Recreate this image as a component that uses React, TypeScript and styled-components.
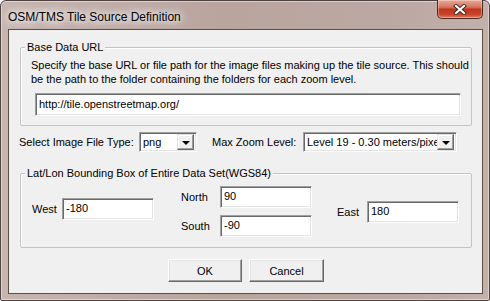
import React from "react";
import styled, { createGlobalStyle } from "styled-components";

const GlobalStyle = createGlobalStyle`
  html, body {
    margin: 0;
    padding: 0;
    background: #ffffff;
    overflow: hidden;
  }
`;

const Window = styled.div`
  box-sizing: border-box;
  width: 490px;
  height: 301px;
  display: flex;
  flex-direction: column;
  border: 1px solid #4e4240;
  border-radius: 6px 6px 2px 2px;
  background: linear-gradient(to right, #c7b5b0 0%, #b9a49e 45%, #bca8a2 80%, #c3b0ab 100%);
  box-shadow: inset 0 0 0 1px rgba(255, 255, 255, 0.45);
  font-family: "Liberation Sans", Arial, sans-serif;
`;

const TitleBar = styled.div`
  height: 28px;
  display: flex;
  align-items: flex-start;
  justify-content: space-between;
  padding-left: 7px;
  padding-right: 6px;
`;

const Title = styled.div`
  margin-top: 9px;
  font-family: "Liberation Sans", Arial, sans-serif;
  font-size: 12px;
  line-height: 14px;
  color: #000;
  text-shadow: 0 0 6px #fff, 0 0 10px #fff, 0 0 14px rgba(255, 255, 255, 0.8);
`;

const CloseButton = styled.div`
  box-sizing: border-box;
  width: 46px;
  height: 19px;
  margin-top: -1px;
  display: flex;
  align-items: center;
  justify-content: center;
  border: 1px solid #4a2a24;
  border-top: none;
  border-radius: 0 0 5px 5px;
  background: linear-gradient(to bottom, #e8a896 0%, #d6735e 40%, #c2361d 52%, #cc4327 80%, #de7a5f 100%);
  box-shadow: inset 0 0 0 1px rgba(255, 255, 255, 0.35);
`;

const Client = styled.div`
  box-sizing: border-box;
  height: 265px;
  margin: 0 6px 6px 7px;
  border: 1px solid #5a4e4b;
  background: #f0f0f0;
  padding: 17px 10px 0 11px;
  display: flex;
  flex-direction: column;
  font-size: 11px;
  color: #000;
`;

const Group = styled.div<{ $height: number }>`
  position: relative;
  box-sizing: border-box;
  width: 452px;
  height: ${(p) => p.$height}px;
  border: 1px solid #c4c4c4;
  border-radius: 2px;
  box-shadow: inset 1px 1px 0 #ffffff;
`;

const Legend = styled.span`
  position: absolute;
  top: -8px;
  left: 4px;
  padding: 0 2px;
  background: #f0f0f0;
  line-height: 14px;
  font-size: 11px;
  white-space: nowrap;
`;

const UrlBody = styled.div`
  padding: 10px 0 0 10px;
  display: flex;
  flex-direction: column;
  gap: 7px;
`;

const Description = styled.div`
  line-height: 14px;
  white-space: nowrap;
`;

const TextBox = styled.input<{ $width: number; $height?: number }>`
  box-sizing: border-box;
  width: ${(p) => p.$width}px;
  height: ${(p) => p.$height ?? 22}px;
  margin: 0;
  padding: 0 0 2px 3px;
  border: 1px solid;
  border-color: #a0a0a0 #ffffff #ffffff #a0a0a0;
  box-shadow: inset 1px 1px 0 #696969, inset -1px -1px 0 #e3e3e3;
  background: #ffffff;
  font-family: "Liberation Sans", Arial, sans-serif;
  font-size: 11px;
  color: #000;
  outline: none;
`;

const ComboRow = styled.div`
  display: flex;
  align-items: center;
  margin: 6px 0 0 -1px;
  height: 20px;
`;

const Label = styled.span<{ $width: number }>`
  width: ${(p) => p.$width}px;
  flex-shrink: 0;
  white-space: nowrap;
  font-size: 11px;
`;

const Combo = styled.div<{ $width: number }>`
  box-sizing: border-box;
  width: ${(p) => p.$width}px;
  height: 20px;
  display: flex;
  align-items: center;
  border: 1px solid;
  border-color: #a0a0a0 #ffffff #ffffff #a0a0a0;
  box-shadow: inset 1px 1px 0 #696969, inset -1px -1px 0 #e3e3e3;
  background: #ffffff;
  padding: 2px;
  margin-right: 15px;
`;

const ComboText = styled.span`
  flex: 1;
  overflow: hidden;
  white-space: nowrap;
  padding-left: 1px;
  font-size: 11px;
  line-height: 16px;
`;

const ComboArrow = styled.span`
  box-sizing: border-box;
  width: 17px;
  height: 16px;
  flex-shrink: 0;
  display: flex;
  align-items: center;
  justify-content: center;
  background: #f0f0f0;
  border: 1px solid;
  border-color: #e3e3e3 #696969 #696969 #e3e3e3;
  box-shadow: inset -1px -1px 0 #a0a0a0, inset 1px 1px 0 #ffffff;

  &::after {
    content: "";
    width: 0;
    height: 0;
    border-left: 4px solid transparent;
    border-right: 4px solid transparent;
    border-top: 4px solid #000;
    margin-top: 1px;
  }
`;

const BoundsGroup = styled(Group)`
  margin-top: 21px;
`;

const BoundsRow = styled.div`
  display: flex;
  align-items: flex-start;
  padding: 12px 0 0 11px;
`;

const Field = styled.div<{ $top: number; $gap: number }>`
  display: flex;
  align-items: center;
  margin-top: ${(p) => p.$top}px;
  margin-right: ${(p) => p.$gap}px;
`;

const NSGrid = styled.div`
  display: grid;
  grid-template-columns: 39px 92px;
  row-gap: 7px;
  align-items: center;
  margin-right: 25px;
`;

const ButtonRow = styled.div`
  display: flex;
  justify-content: center;
  gap: 7px;
  margin-top: 11px;
`;

const Button = styled.button<{ $width: number }>`
  box-sizing: border-box;
  width: ${(p) => p.$width}px;
  height: 23px;
  margin: 0;
  padding: 0;
  border: 1px solid;
  border-color: #ffffff #696969 #696969 #ffffff;
  box-shadow: inset -1px -1px 0 #a0a0a0, inset 1px 1px 0 #e3e3e3;
  background: #f0f0f0;
  font-family: "Liberation Sans", Arial, sans-serif;
  font-size: 11px;
  color: #000;
`;

export default function App() {
  return (
    <>
      <GlobalStyle />
      <Window>
        <TitleBar>
          <Title>OSM/TMS Tile Source Definition</Title>
          <CloseButton>
            <svg width="14" height="11" viewBox="0 0 14 11">
              <path d="M3 2 L11 9 M11 2 L3 9" stroke="#3a2522" strokeWidth="4" strokeLinecap="square" fill="none" />
              <path d="M3 2 L11 9 M11 2 L3 9" stroke="#ffffff" strokeWidth="2.2" strokeLinecap="square" fill="none" />
            </svg>
          </CloseButton>
        </TitleBar>
        <Client>
          <Group $height={79}>
            <Legend>Base Data URL</Legend>
            <UrlBody>
              <Description>
                Specify the base URL or file path for the image files making up the tile source. This should
                <br />
                be the path to the folder containing the folders for each zoom level.
              </Description>
              <TextBox $width={426} $height={23} style={{ marginLeft: 4 }} readOnly value="http://tile.openstreetmap.org/" />
            </UrlBody>
          </Group>

          <ComboRow>
            <Label $width={120}>Select Image File Type:</Label>
            <Combo $width={72}>
              <ComboText>png</ComboText>
              <ComboArrow />
            </Combo>
            <Label $width={91}>Max Zoom Level:</Label>
            <Combo $width={154}>
              <ComboText>Level 19 - 0.30 meters/pixel</ComboText>
              <ComboArrow />
            </Combo>
          </ComboRow>

          <BoundsGroup $height={75}>
            <Legend>Lat/Lon Bounding Box of Entire Data Set(WGS84)</Legend>
            <BoundsRow>
              <Field $top={12} $gap={27}>
                <Label $width={30}>West</Label>
                <TextBox $width={92} readOnly value="-180" />
              </Field>
              <NSGrid>
                <Label $width={39}>North</Label>
                <TextBox $width={92} readOnly value="90" />
                <Label $width={39}>South</Label>
                <TextBox $width={92} readOnly value="-90" />
              </NSGrid>
              <Field $top={15} $gap={0}>
                <Label $width={30}>East</Label>
                <TextBox $width={92} readOnly value="180" />
              </Field>
            </BoundsRow>
          </BoundsGroup>

          <ButtonRow>
            <Button $width={74}>OK</Button>
            <Button $width={75}>Cancel</Button>
          </ButtonRow>
        </Client>
      </Window>
    </>
  );
}
